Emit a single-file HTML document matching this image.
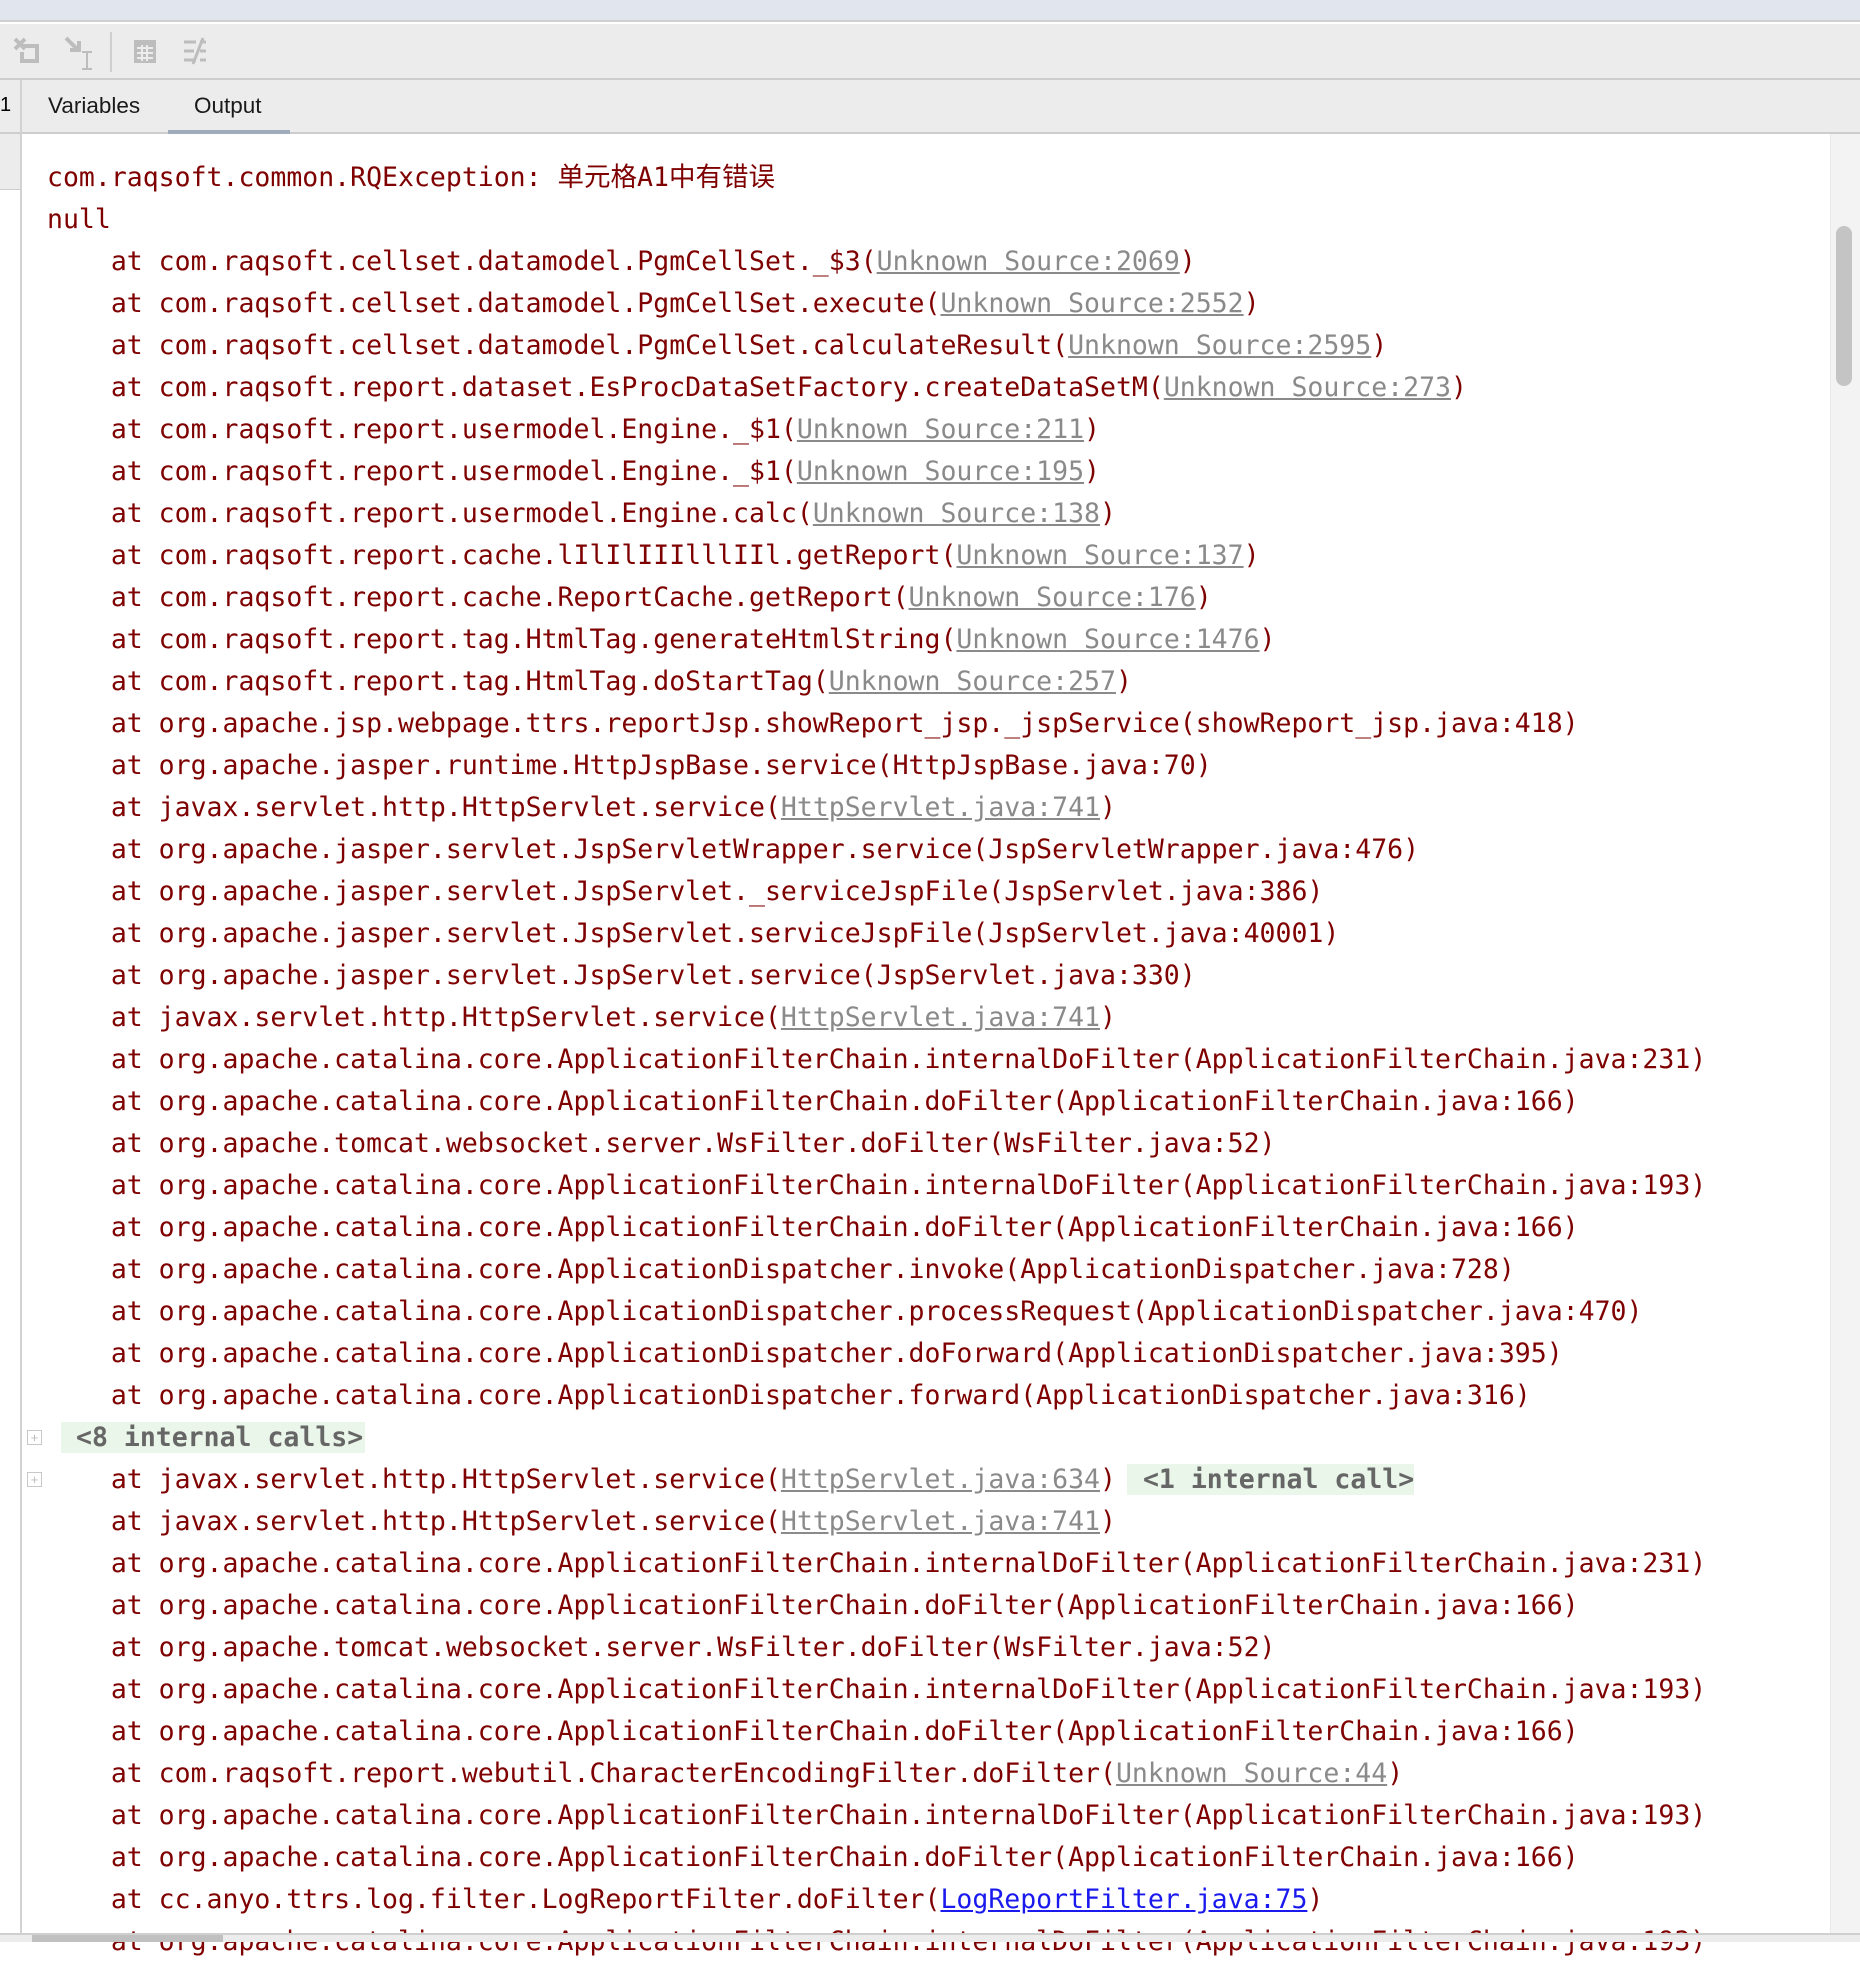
<!DOCTYPE html>
<html><head><meta charset="utf-8"><style>
*{margin:0;padding:0;box-sizing:border-box}
body{width:1860px;height:1942px;overflow:hidden;background:#fff;position:relative;font-family:"Liberation Sans",sans-serif}
.top{position:absolute;left:0;top:0;width:1860px;height:22px;background:#e1e5ed;border-bottom:2px solid #cfcfcf}
.tool{position:absolute;left:0;top:24px;width:1860px;height:56px;background:#ececec;border-bottom:2px solid #cdcdcd}
.tabs{position:absolute;left:0;top:80px;width:1860px;height:54px;background:#ececec;border-bottom:2px solid #cdcdcd}
.tab{position:absolute;top:13px;font-size:22.5px;color:#1a1a1a}
.ul{position:absolute;left:168px;top:50px;width:122px;height:4px;background:#a0abbc}
.leftstrip{position:absolute;left:0;top:134px;width:20px;height:56px;background:#ececec;border-bottom:1px solid #ccc}
.gutter{position:absolute;left:20px;top:80px;width:2px;height:1854px;background:#d2d2d2}
.vs{position:absolute;left:1830px;top:134px;width:30px;height:1800px;background:#f3f3f3;border-left:1px solid #e8e8e8}
.thumb{position:absolute;left:1836px;top:226px;width:16px;height:160px;border-radius:8px;background:#c4c4c4}
.hs{position:absolute;left:0;top:1933px;width:1860px;height:9px;background:#ececec;border-top:2px solid #cfcfcf}
.hthumb{position:absolute;left:32px;top:1935px;width:191px;height:7px;background:#c0c0c0}
.out{position:absolute;left:47px;top:157px;font-family:"DejaVu Sans Mono","Noto Sans CJK SC",monospace;font-size:26.5px;line-height:42px;color:#7f0000;white-space:pre}
.out a{color:#8a8a8a;text-decoration:underline}
.out a.b{color:#1a1aee}
.ic{background:#eaf6ea;color:#666;font-weight:bold}
.fold{position:absolute;left:27px;width:15px;height:15px;border:1px solid #c8c8c8;color:#bbb;font-size:13px;line-height:13px;text-align:center}
</style></head><body>
<div class="top"></div>
<div class="tool">
<svg width="260" height="56" style="position:absolute;left:0;top:0" fill="none" stroke="#bdbdbd" stroke-width="4">
<path d="M15 15 L25 25 M25 15 L15 25"/><path d="M22 22 H37 V37 H22 V28"/>
<path d="M66 14 L78 26 M70 26 H79 V17" /><path d="M82 28 H92 M87 28 V45 M82 45 H92" stroke-width="2"/>
<line x1="111" y1="8" x2="111" y2="48" stroke="#cfcfcf" stroke-width="2"/>
<rect x="134" y="16" width="22" height="23" fill="#bdbdbd" stroke="none"/><path d="M137 24 H153 M137 29 H153 M137 34 H153 M142 21 V37 M147 21 V37" stroke="#ececec" stroke-width="2"/>
<path d="M184 18 H196 M184 27 H194 M184 36 H196 M200 18 H206 M200 27 H206 M200 36 H206 M203 14 L193 40" stroke-width="3"/>
</svg>
</div>
<div class="tabs"><span style="position:absolute;left:0;top:14px;font-size:20px">1</span><span class="tab" style="left:48px">Variables</span><span class="tab" style="left:194px">Output</span><div class="ul"></div></div>
<div class="leftstrip"></div>
<div class="gutter"></div>
<div class="fold" style="top:1430px">+</div>
<div class="fold" style="top:1472px">+</div>
<div class="out">com.raqsoft.common.RQException: 单元格A1中有错误
null
    at com.raqsoft.cellset.datamodel.PgmCellSet._$3(<a>Unknown Source:2069</a>)
    at com.raqsoft.cellset.datamodel.PgmCellSet.execute(<a>Unknown Source:2552</a>)
    at com.raqsoft.cellset.datamodel.PgmCellSet.calculateResult(<a>Unknown Source:2595</a>)
    at com.raqsoft.report.dataset.EsProcDataSetFactory.createDataSetM(<a>Unknown Source:273</a>)
    at com.raqsoft.report.usermodel.Engine._$1(<a>Unknown Source:211</a>)
    at com.raqsoft.report.usermodel.Engine._$1(<a>Unknown Source:195</a>)
    at com.raqsoft.report.usermodel.Engine.calc(<a>Unknown Source:138</a>)
    at com.raqsoft.report.cache.lIlIlIIIlllIIl.getReport(<a>Unknown Source:137</a>)
    at com.raqsoft.report.cache.ReportCache.getReport(<a>Unknown Source:176</a>)
    at com.raqsoft.report.tag.HtmlTag.generateHtmlString(<a>Unknown Source:1476</a>)
    at com.raqsoft.report.tag.HtmlTag.doStartTag(<a>Unknown Source:257</a>)
    at org.apache.jsp.webpage.ttrs.reportJsp.showReport_jsp._jspService(showReport_jsp.java:418)
    at org.apache.jasper.runtime.HttpJspBase.service(HttpJspBase.java:70)
    at javax.servlet.http.HttpServlet.service(<a>HttpServlet.java:741</a>)
    at org.apache.jasper.servlet.JspServletWrapper.service(JspServletWrapper.java:476)
    at org.apache.jasper.servlet.JspServlet._serviceJspFile(JspServlet.java:386)
    at org.apache.jasper.servlet.JspServlet.serviceJspFile(JspServlet.java:40001)
    at org.apache.jasper.servlet.JspServlet.service(JspServlet.java:330)
    at javax.servlet.http.HttpServlet.service(<a>HttpServlet.java:741</a>)
    at org.apache.catalina.core.ApplicationFilterChain.internalDoFilter(ApplicationFilterChain.java:231)
    at org.apache.catalina.core.ApplicationFilterChain.doFilter(ApplicationFilterChain.java:166)
    at org.apache.tomcat.websocket.server.WsFilter.doFilter(WsFilter.java:52)
    at org.apache.catalina.core.ApplicationFilterChain.internalDoFilter(ApplicationFilterChain.java:193)
    at org.apache.catalina.core.ApplicationFilterChain.doFilter(ApplicationFilterChain.java:166)
    at org.apache.catalina.core.ApplicationDispatcher.invoke(ApplicationDispatcher.java:728)
    at org.apache.catalina.core.ApplicationDispatcher.processRequest(ApplicationDispatcher.java:470)
    at org.apache.catalina.core.ApplicationDispatcher.doForward(ApplicationDispatcher.java:395)
    at org.apache.catalina.core.ApplicationDispatcher.forward(ApplicationDispatcher.java:316)
<span class="ic" style="margin-left:14px;padding:0 2px 0 15px"><8 internal calls></span>
    at javax.servlet.http.HttpServlet.service(<a>HttpServlet.java:634</a>)<span class="ic" style="margin-left:11px;padding:0 0 0 16px"><1 internal call></span>
    at javax.servlet.http.HttpServlet.service(<a>HttpServlet.java:741</a>)
    at org.apache.catalina.core.ApplicationFilterChain.internalDoFilter(ApplicationFilterChain.java:231)
    at org.apache.catalina.core.ApplicationFilterChain.doFilter(ApplicationFilterChain.java:166)
    at org.apache.tomcat.websocket.server.WsFilter.doFilter(WsFilter.java:52)
    at org.apache.catalina.core.ApplicationFilterChain.internalDoFilter(ApplicationFilterChain.java:193)
    at org.apache.catalina.core.ApplicationFilterChain.doFilter(ApplicationFilterChain.java:166)
    at com.raqsoft.report.webutil.CharacterEncodingFilter.doFilter(<a>Unknown Source:44</a>)
    at org.apache.catalina.core.ApplicationFilterChain.internalDoFilter(ApplicationFilterChain.java:193)
    at org.apache.catalina.core.ApplicationFilterChain.doFilter(ApplicationFilterChain.java:166)
    at cc.anyo.ttrs.log.filter.LogReportFilter.doFilter(<a class="b">LogReportFilter.java:75</a>)
    at org.apache.catalina.core.ApplicationFilterChain.internalDoFilter(ApplicationFilterChain.java:193)</div>
<div class="vs"></div><div class="thumb"></div>
<div class="hs"></div><div class="hthumb"></div>
</body></html>
